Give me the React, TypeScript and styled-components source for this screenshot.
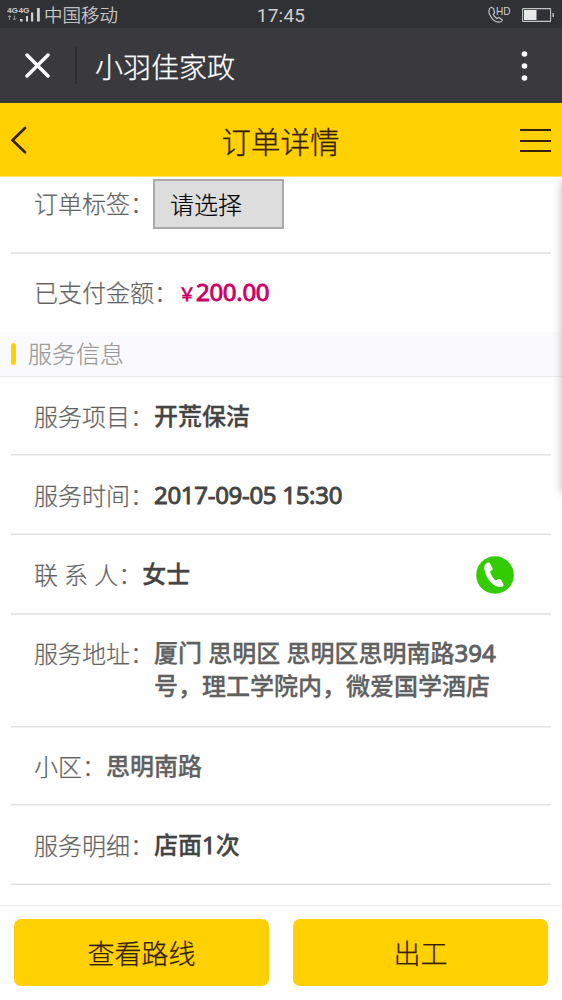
import React from "react";
import styled, { createGlobalStyle } from "styled-components";

const GlobalStyle = createGlobalStyle`
  * { box-sizing: border-box; }
  body {
    margin: 0;
    background: #fefefe;
    font-family: "Noto Sans", "Noto Sans CJK SC", sans-serif;
    font-weight: 300;
  }
`;

const Screen = styled.div`
  width: 562px;
  height: 1000px;
  display: flex;
  flex-direction: column;
  overflow: hidden;
  background: #fefefe;
`;

const StatusBar = styled.div`
  height: 28px;
  flex: none;
  display: grid;
  grid-template-columns: 1fr auto 1fr;
  align-items: center;
  background: #303134;
  color: #cfcfd0;
  padding: 0 8px 0 7px;
`;

const Carrier = styled.div`
  display: flex;
  align-items: center;
  gap: 3px;
  height: 28px;
  padding-bottom: 2px;
  font: 300 18.5px/26px "Noto Sans CJK SC", sans-serif;
  -webkit-text-stroke: 0.25px;
`;

const Clock = styled.div`
  font: 400 19px/28px Roboto, sans-serif;
  letter-spacing: 0.2px;
  padding: 2px 0 0 1px;
`;

const StatusIcons = styled.div`
  display: flex;
  justify-content: flex-end;
  margin-top: -3px;
`;

const AppBar = styled.div`
  height: 75px;
  flex: none;
  display: flex;
  align-items: center;
  background: #39393e;
  color: #fff;
  padding: 0 32px 0 25px;
`;

const AppDivider = styled.div`
  width: 2px;
  height: 37px;
  margin: 0 18px 0 25px;
  background: #2e2e32;
`;

const AppTitle = styled.div`
  flex: 1;
  font: 300 28px/40px "Noto Sans CJK SC", sans-serif;
  -webkit-text-stroke: 0.3px;
`;

const PageBar = styled.div`
  height: 74px;
  flex: none;
  display: grid;
  grid-template-columns: 60px 1fr 60px;
  align-items: center;
  background: #ffd103;
  border-bottom: 1px solid #ffe36a;
  padding: 0 11px 0 10px;
  color: #35200a;
`;

const PageTitle = styled.div`
  text-align: center;
  font: 300 29.5px/42px "Noto Sans CJK SC", sans-serif;
  -webkit-text-stroke: 0.3px;
`;

const MenuLines = styled.div`
  justify-self: end;
  width: 31px;
  height: 23px;
  display: flex;
  flex-direction: column;
  justify-content: space-between;
  margin-top: 2px;
`;

const MenuLine = styled.div`
  height: 2px;
  background: #35200a;
`;

const Content = styled.div`
  position: relative;
  height: 728px;
  flex: none;
  overflow: hidden;
`;

const EdgeShadow = styled.div`
  position: absolute;
  top: 4px;
  left: 562px;
  width: 20px;
  height: 312px;
  box-shadow: 0 0 8px rgba(0, 0, 0, 0.28);
`;

const Row = styled.div<{ $height: number; $top?: number }>`
  display: flex;
  align-items: flex-start;
  height: ${(p) => p.$height}px;
  padding: ${(p) => p.$top ?? 22}px 37px 0 23px;
  margin: 0 11px;
  font-size: 24px;
  line-height: 33px;
`;

const Divider = styled.div<{ $upper: string; $lower: string }>`
  height: 2px;
  margin: 0 11px;
  border-top: 1px solid ${(p) => p.$upper};
  border-bottom: 1px solid ${(p) => p.$lower};
`;

const Label = styled.div<{ $spaced?: boolean }>`
  flex: none;
  color: #626262;
  font-family: "Noto Sans CJK SC", sans-serif;
  font-weight: 300;
  word-spacing: ${(p) => (p.$spaced ? 0.8 : 0)}px;
  -webkit-text-stroke: 0.2px;
`;

const Value = styled.div<{ $soft?: boolean }>`
  flex: 1;
  color: ${(p) => (p.$soft ? "#606060" : "#444")};
  font-weight: 500;
  -webkit-text-stroke: 0.3px;
`;

const Num = styled.span<{ $tight?: boolean }>`
  font-weight: 400;
  letter-spacing: ${(p) => (p.$tight ? -0.3 : 0)}px;
  -webkit-text-stroke: 0.9px;
`;

const Amount = styled(Value)`
  color: #cc0066;
`;

const Yen = styled.span`
  display: inline-block;
  width: 18px;
  font: 500 18px/30px "Noto Sans CJK SC", sans-serif;
`;

const TagSelect = styled.button`
  width: 131px;
  height: 50px;
  padding: 0 0 0 15px;
  text-align: left;
  border: 2px solid #aaa;
  background: #ddd;
  color: #000;
  font: 300 24px/44px "Noto Sans CJK SC", sans-serif;
  -webkit-text-stroke: 0.2px;
  margin: -7px 0 0 -1px;
`;

const Section = styled.div`
  height: 45px;
  display: flex;
  align-items: center;
  gap: 12px;
  padding-left: 11px;
  background: #fafafc;
  border-bottom: 1px solid #ececee;
  color: #999;
`;

const SectionMark = styled.div`
  width: 5px;
  height: 22px;
  border-radius: 3px;
  background: #ffd103;
`;

const SectionTitle = styled.div`
  font: 300 24px/40px "Noto Sans CJK SC", sans-serif;
  -webkit-text-stroke: 0.2px;
  padding-bottom: 2px;
`;

const CallIcon = styled.svg`
  width: 38px;
  height: 38px;
  margin-top: -1px;
`;

const Footer = styled.div`
  flex: 1;
  display: grid;
  grid-template-columns: 255px 255px;
  justify-content: space-between;
  align-items: start;
  border-top: 1px solid #ebebeb;
  padding: 13px 14px 0;
`;

const ActionButton = styled.button`
  height: 67px;
  border: 0;
  border-radius: 7px;
  background: #ffd103;
  color: #35200a;
  font: 300 27px/66px "Noto Sans CJK SC", sans-serif;
  -webkit-text-stroke: 0.25px;
  padding: 1px 0 0;
`;

const SignalSvg = styled.svg`
  -webkit-text-stroke: 0;
`;

const SignalIcon = () => (
  <SignalSvg width="34" height="18" viewBox="0 0 34 18">
    <g fill="#cfcfd0" fontFamily="Liberation Sans" fontSize="8" fontWeight="700">
      <text x="0" y="8" textLength="11" lengthAdjust="spacingAndGlyphs">4G</text>
      <text x="11.500" y="8" textLength="11" lengthAdjust="spacingAndGlyphs">4G</text>
    </g>
    <path d="M2.500 15v-4.500M1 12l1.500-1.500L4 12M7.500 10.500V15M6 13.500l1.500 1.500L9 13.500" fill="none" stroke="#98989a" />
    <path d="M13 14h2.500v2.500h-2.500zM19 11h2v5.500h-2zM24 7.500h2.200v9h-2.200zM30 3h2.800v13.500h-2.800z" fill="#cfcfd0" />
  </SignalSvg>
);

const PhoneStatusIcon = () => (
  <svg width="67" height="24" viewBox="0 0 67 24">
    <path
      d="M4.200 4.300C1.500 5.600 1.300 9 3 12.200c2 3.800 5.500 7 9 7 1.800 0 3-1 3.500-2.300l-3.500-2.500-2 1.200c-1.800-.9-3.200-2.500-3.800-4.300L7.700 9.600 6.500 5.500z"
      transform="translate(0 1)"
      fill="none" stroke="#c4c4c6" strokeWidth="1.200" strokeLinejoin="round"
    />
    <text x="9" y="12.700" fill="#cfcfd0" fontFamily="Liberation Sans" fontSize="11.500" textLength="14.500" lengthAdjust="spacingAndGlyphs">HD</text>
    <rect x="35.600" y="6.600" width="28" height="12.800" rx="0.500" fill="none" stroke="#c4c4c6" strokeWidth="1.100" />
    <rect x="37" y="8" width="12.500" height="10" fill="#e8e8e8" />
    <path d="M66.200 11v4" stroke="#c4c4c6" strokeWidth="1.400" />
  </svg>
);

export default function App() {
  return (
    <>
      <GlobalStyle />
      <Screen>
        <StatusBar>
          <Carrier>
            <SignalIcon />
            中国移动
          </Carrier>
          <Clock>17:45</Clock>
          <StatusIcons>
            <PhoneStatusIcon />
          </StatusIcons>
        </StatusBar>

        <AppBar>
          <svg width="25" height="25" viewBox="0 0 25 25">
            <path d="M2 2l21 21M23 2L2 23" stroke="#fff" strokeWidth="3.400" strokeLinecap="round" />
          </svg>
          <AppDivider />
          <AppTitle>小羽佳家政</AppTitle>
          <svg width="12" height="32" viewBox="0 0 12 32" fill="#fff">
            <circle cx="6.500" cy="4" r="2.800" />
            <circle cx="6.500" cy="16" r="2.800" />
            <circle cx="6.500" cy="28" r="2.800" />
          </svg>
        </AppBar>

        <PageBar>
          <svg width="18" height="28" viewBox="0 0 18 28">
            <path d="M15 2L2.500 14.300 15 26.300" fill="none" stroke="#35200a" strokeWidth="2.600" strokeLinecap="round" />
          </svg>
          <PageTitle>订单详情</PageTitle>
          <MenuLines>
            <MenuLine />
            <MenuLine />
            <MenuLine />
          </MenuLines>
        </PageBar>

        <Content>
          <Row $height={75} $top={9}>
            <Label>订单标签：</Label>
            <TagSelect>请选择</TagSelect>
          </Row>
          <Divider $upper="#e7e7e7" $lower="#e7e7e7" />
          <Row $height={78} $top={21}>
            <Label>已支付金额：</Label>
            <Amount>
              <Yen>￥</Yen>
              <Num $tight>200.00</Num>
            </Amount>
          </Row>
          <Section>
            <SectionMark />
            <SectionTitle>服务信息</SectionTitle>
          </Section>
          <Row $height={77}>
            <Label>服务项目：</Label>
            <Value>开荒保洁</Value>
          </Row>
          <Divider $upper="#e2e2e2" $lower="#f0f0f0" />
          <Row $height={77}>
            <Label>服务时间：</Label>
            <Value><Num $tight>2017-09-05 15:30</Num></Value>
          </Row>
          <Divider $upper="#f0f0f0" $lower="#e2e2e2" />
          <Row $height={78}>
            <Label $spaced>联 系 人：</Label>
            <Value>女士</Value>
            <CallIcon viewBox="0 0 38 38">
              <circle cx="19" cy="19" r="18.800" fill="#33cc00" />
              <path
                transform="translate(-0.800 0.400)"
                d="M13.200 6.200c-2.800.6-4.500 3-4.100 6.300.8 7.500 7 16.200 14 17.900 2.100.5 4.200 0 5-1.100.5-.8.100-1.700-.5-2.700l-2-3.400c-.6-.9-1.500-.9-2.500-.3l-2.400 1.300c-2.500-1.600-5.300-6-5.800-9l2-1.500c.7-.5.7-1.100.3-1.900l-2.300-4.800c-.4-.8-1-1-1.700-.8z"
                fill="#fff"
              />
            </CallIcon>
          </Row>
          <Divider $upper="#e7e7e7" $lower="#e7e7e7" />
          <Row $height={111} $top={21}>
            <Label>服务地址：</Label>
            <Value $soft>
              厦门 思明区 思明区思明南路<Num>394</Num>
              <br />
              号，理工学院内，微爱国学酒店
            </Value>
          </Row>
          <Divider $upper="#e2e2e2" $lower="#f0f0f0" />
          <Row $height={76} $top={21}>
            <Label $spaced>小区： </Label>
            <Value $soft>思明南路</Value>
          </Row>
          <Divider $upper="#e2e2e2" $lower="#f0f0f0" />
          <Row $height={77}>
            <Label>服务明细：</Label>
            <Value>店面<Num>1</Num>次</Value>
          </Row>
          <Divider $upper="#f0f0f0" $lower="#e2e2e2" />
          <EdgeShadow />
        </Content>

        <Footer>
          <ActionButton>查看路线</ActionButton>
          <ActionButton>出工</ActionButton>
        </Footer>
      </Screen>
    </>
  );
}
